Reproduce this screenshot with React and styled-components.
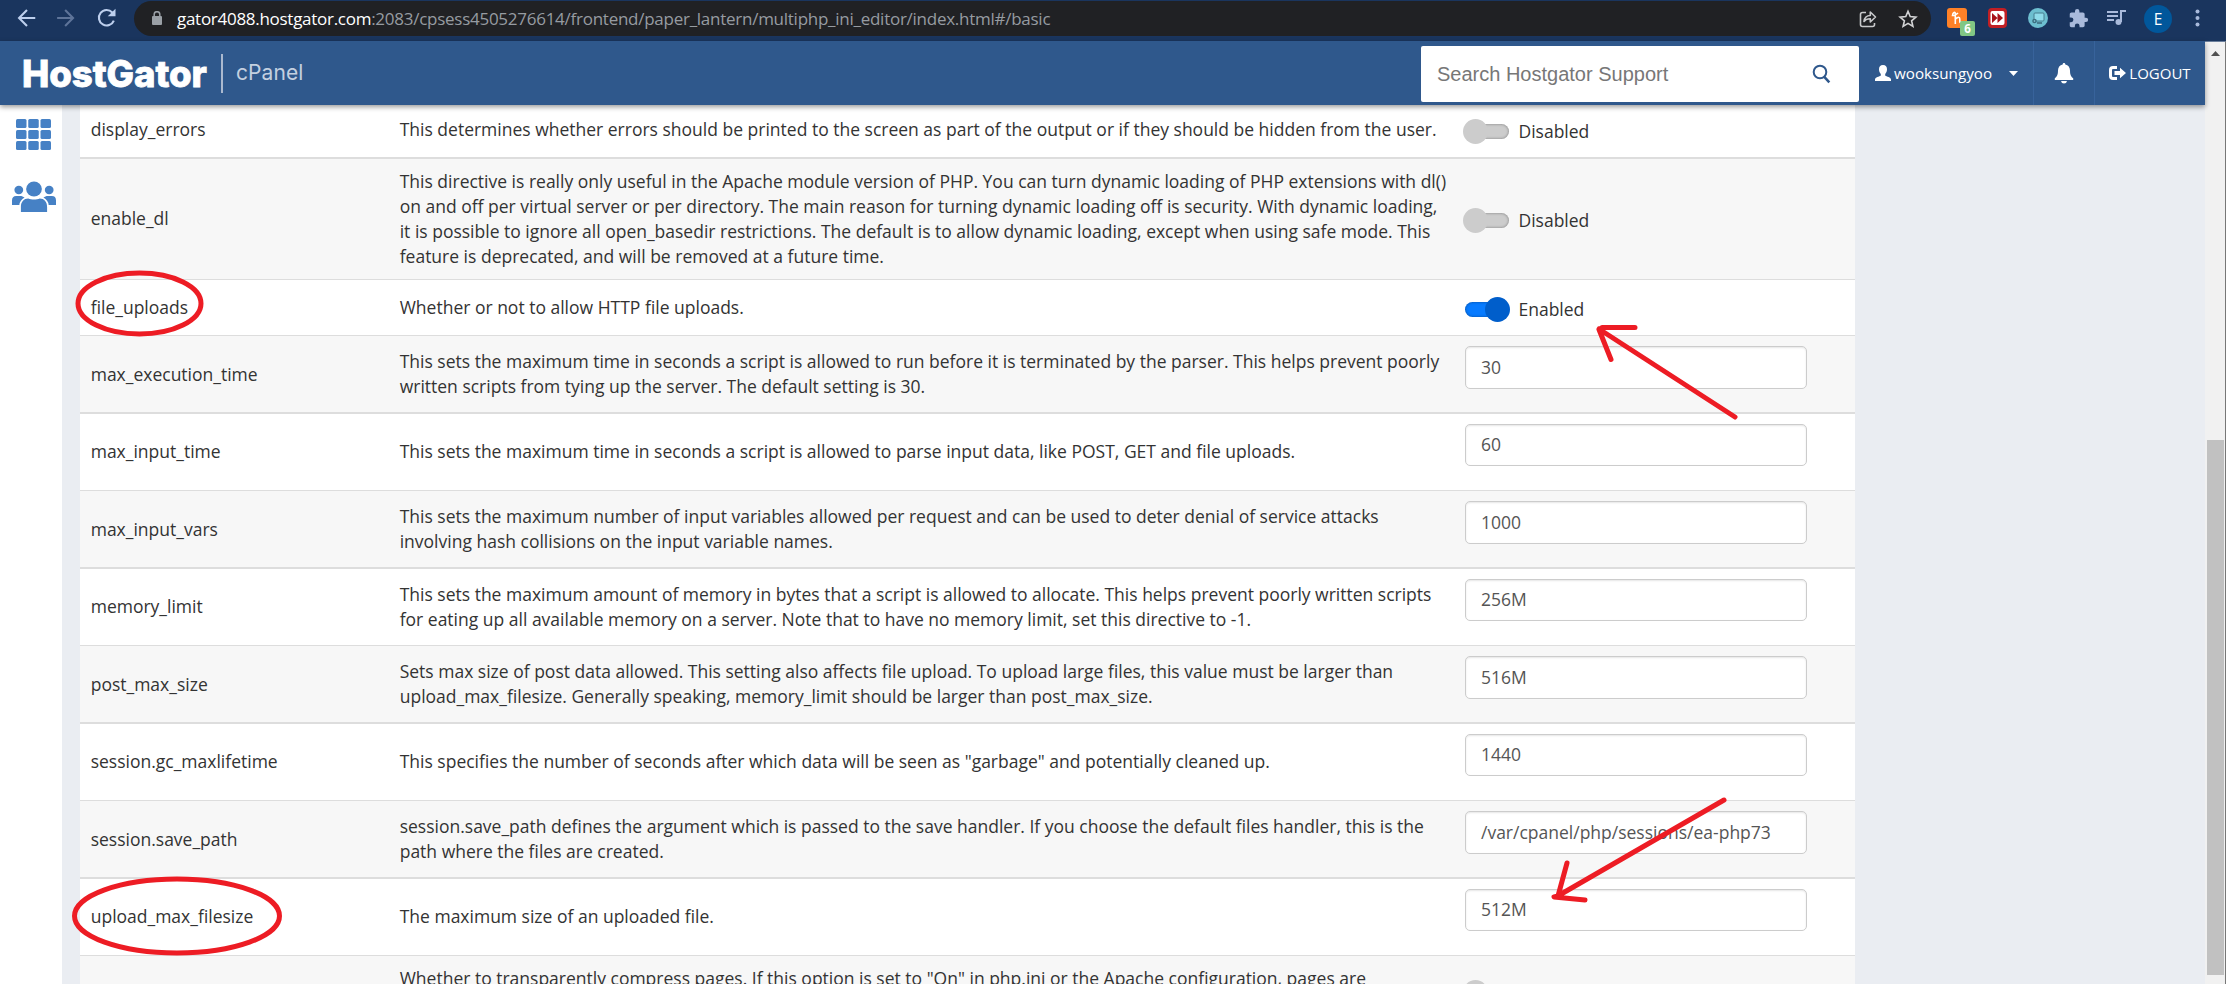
import React from 'react';
import styled, { createGlobalStyle } from 'styled-components';

const Global = createGlobalStyle`
  * { box-sizing: border-box; }
  body { margin: 0; width: 2226px; height: 984px; overflow: hidden; background: #eaedf2;
    font-family: 'Open Sans', 'Noto Sans', sans-serif; font-size: 17.5px; line-height: 25px; color: #333; }
`;
const Page = styled.div`position: relative; width: 2226px; height: 984px; overflow: hidden; display: flex; flex-direction: column;`;

const Chrome = styled.div`height: 41px; flex: none; background: #1a355e; display: flex; align-items: flex-start;`;
const NavIcons = styled.div`width: 134px; flex: none; height: 36px; padding-left: 16px; display: flex; align-items: center; gap: 18px;`;
const AddressBar = styled.div`width: 1797px; flex: none; height: 35px; margin-top: 1px; border-radius: 18px; background: #202124; display: flex; align-items: center; padding: 0 13px 0 17px;`;
const Url = styled.div`flex: 1; margin-left: 14px; font: 17px/35px 'Open Sans', sans-serif; letter-spacing: -.26px; color: #969ba1; white-space: nowrap;
  b { color: #fff; font-weight: 400; letter-spacing: -.28px; }`;
const BarIcons = styled.div`display: flex; align-items: center; gap: 20px;`;
const Extensions = styled.div`flex: 1; height: 36px; display: flex; align-items: center; position: relative; padding-left: 16px;`;
const ExtSlot = styled.div`width: ${p => p.$w}px; flex: none; height: 36px; display: flex; align-items: center;`;
const ExtBadge = styled.div`position: absolute; left: 29px; top: 21px; width: 15px; height: 15px; border-radius: 2px; background: #81c784; color: #fff; font: 700 11.5px/16px 'Open Sans', sans-serif; text-align: center;`;
const Avatar = styled.div`width: 28px; height: 28px; margin-top: 2px; border-radius: 50%; background: #01579b; color: #fff; font: 15.5px/28px 'Open Sans', sans-serif; text-align: center;`;

const Body = styled.div`flex: 1; min-height: 0; display: flex;`;
const Site = styled.div`width: 2205px; flex: none; display: flex; flex-direction: column;`;
const Header = styled.header`position: relative; z-index: 2; height: 64px; flex: none; background: #2f588c; box-shadow: 0 2px 5px rgba(0,0,0,.4); display: flex;`;
const Brand = styled.div`flex: 1; display: flex; align-items: flex-start; padding-left: 22px;`;
const Logo = styled.div`width: 199px; flex: none; font: 800 36.5px/40px 'Inter', sans-serif; letter-spacing: -.05px; color: #fff; margin-top: 13px; white-space: nowrap; -webkit-text-stroke: .8px #fff;`;
const CPanel = styled.div`height: 39px; margin-top: 13px; border-left: 2px solid #aab9cf; padding-left: 13px; font: 21px/37px 'Inter', sans-serif; letter-spacing: .1px; color: #c4d0e0;`;
const Search = styled.div`width: 438px; flex: none; height: 56px; margin-top: 5px; background: #fff; border-radius: 2px; display: flex; align-items: center; justify-content: space-between; padding: 0 28px 0 16px; font: 20px/57px 'Liberation Sans', sans-serif; color: #777;`;
const UserMenu = styled.div`width: 174px; flex: none; display: flex; align-items: center; padding: 0 0 0 16px; color: #fff; font: 500 15.2px/66px 'Open Sans', sans-serif;`;
const UserName = styled.span`margin-left: 3px; width: 97px;`;
const Caret = styled.svg`margin-left: 18px;`;
const HeaderButton = styled.div`width: ${p => p.$w}px; flex: none; border-left: 1px solid #38639b; display: flex; align-items: center; justify-content: center; gap: 3px; color: #fff; font: 500 15px/66px 'Open Sans', sans-serif;`;

const Content = styled.div`flex: 1; min-height: 0; display: flex;`;
const Sidebar = styled.nav`width: 62px; flex: none; background: #fff; display: flex; flex-direction: column; align-items: center; padding: 14px 0 0 5px; gap: 31px;`;
const Table = styled.div`width: 1775px; flex: none; margin-left: 18px; background: #fff; overflow: hidden;`;
const Row = styled.div`height: ${p => p.$h}px; border-top: ${p => p.$line}px solid #ddd; background: ${p => (p.$alt ? '#f7f7f7' : '#fff')}; display: grid; grid-template-columns: 309px 1063.3px 1fr; padding-left: 10.7px; overflow: hidden;`;
const Name = styled.div`padding-top: ${p => p.$top}px; white-space: nowrap;`;
const Description = styled.div`padding-top: ${p => p.$top}px; white-space: nowrap;`;
const Setting = styled.div`padding-top: ${p => p.$top}px; display: flex; align-items: flex-start;`;
const Field = styled.div`width: 342px; height: ${p => p.$h}px; margin-left: 2px; border: 1px solid #ccc; border-radius: 5px; background: #fff; box-shadow: inset 0 1px 2px rgba(0,0,0,.1); padding-left: 15px; color: #555; line-height: ${p => (p.$h === 43 ? 41 : 39)}px;`;
const Toggle = styled.div`position: relative; width: 47px; height: 25px; display: flex; align-items: center; justify-content: ${p => (p.$on ? 'flex-end' : 'flex-start')};
  &::before { content: ''; position: absolute; left: 2px; right: ${p => (p.$on ? 2 : 1)}px; top: 5px; height: 15px; border-radius: 8px; background: ${p => (p.$on ? '#077bff' : '#ccc')}; box-shadow: inset 0 0 3px rgba(0,0,0,.4); }
  &::after { content: ''; position: relative; width: 25px; height: 25px; border-radius: 50%; background: ${p => (p.$on ? '#005ecb' : '#ccc')}; }`;
const ToggleLabel = styled.span`margin-left: 8.5px;`;
const Scrollbar = styled.div`width: 21px; background: #f1f1f1; border-top: 1px solid #6b7f9c; border-right: 1px solid #777; display: flex; flex-direction: column; align-items: center;`;
const Arrow = styled.svg`margin: 9px 0 0 1px; flex: none;`;
const Thumb = styled.div`width: 17px; height: 535px; flex: none; margin: 384px 0 0 1px; background: #c1c1c1;`;
const Annotations = styled.svg`position: absolute; inset: 0; z-index: 5; pointer-events: none;`;

const settings = [
  { name: 'display_errors', lines: ['This determines whether errors should be printed to the screen as part of the output or if they should be hidden from the user.'], state: 'Disabled', h: 52, line: 0, n: 12, d: 12, c: 14 },
  { name: 'enable_dl', lines: ['This directive is really only useful in the Apache module version of PHP. You can turn dynamic loading of PHP extensions with dl()', 'on and off per virtual server or per directory. The main reason for turning dynamic loading off is security. With dynamic loading,', 'it is possible to ignore all open_basedir restrictions. The default is to allow dynamic loading, except when using safe mode. This', 'feature is deprecated, and will be removed at a future time.'], state: 'Disabled', h: 122, line: 2, n: 47, d: 10, c: 49 },
  { name: 'file_uploads', lines: ['Whether or not to allow HTTP file uploads.'], state: 'Enabled', h: 56, line: 1, n: 15, d: 15, c: 17 },
  { name: 'max_execution_time', lines: ['This sets the maximum time in seconds a script is allowed to run before it is terminated by the parser. This helps prevent poorly', 'written scripts from tying up the server. The default setting is 30.'], value: '30', h: 77, line: 1 },
  { name: 'max_input_time', lines: ['This sets the maximum time in seconds a script is allowed to parse input data, like POST, GET and file uploads.'], value: '60', h: 78, line: 2 },
  { name: 'max_input_vars', lines: ['This sets the maximum number of input variables allowed per request and can be used to deter denial of service attacks', 'involving hash collisions on the input variable names.'], value: '1000', h: 77, line: 1 },
  { name: 'memory_limit', lines: ['This sets the maximum amount of memory in bytes that a script is allowed to allocate. This helps prevent poorly written scripts', 'for eating up all available memory on a server. Note that to have no memory limit, set this directive to -1.'], value: '256M', h: 78, line: 2, d: 13 },
  { name: 'post_max_size', lines: ['Sets max size of post data allowed. This setting also affects file upload. To upload large files, this value must be larger than', 'upload_max_filesize. Generally speaking, memory_limit should be larger than post_max_size.'], value: '516M', h: 77, line: 1 },
  { name: 'session.gc_maxlifetime', lines: ['This specifies the number of seconds after which data will be seen as "garbage" and potentially cleaned up.'], value: '1440', h: 78, line: 2 },
  { name: 'session.save_path', lines: ['session.save_path defines the argument which is passed to the save handler. If you choose the default files handler, this is the', 'path where the files are created.'], value: '/var/cpanel/php/sessions/ea-php73', h: 77, line: 1 },
  { name: 'upload_max_filesize', lines: ['The maximum size of an uploaded file.'], value: '512M', h: 78, line: 2 },
  { name: '', lines: ['Whether to transparently compress pages. If this option is set to "On" in php.ini or the Apache configuration, pages are'], state: '', h: 60, line: 1, n: 12, d: 10, c: 24 },
];

function SettingRow({ item, alt }) {
  const name = item.n ?? 27 - item.line;
  const desc = item.d ?? (item.lines.length === 2 ? 14 : 27) - item.line;
  return (
    <Row $h={item.h} $line={item.line} $alt={alt}>
      <Name $top={name}>{item.name}</Name>
      <Description $top={desc}>{item.lines.map(l => <div key={l}>{l}</div>)}</Description>
      <Setting $top={item.c ?? 10}>
        {item.value ? <Field $h={item.line === 1 ? 43 : 42}>{item.value}</Field> : <><Toggle $on={item.state === 'Enabled'} /><ToggleLabel>{item.state}</ToggleLabel></>}
      </Setting>
    </Row>
  );
}

const stroke = { fill: 'none', strokeWidth: 1.9 };

export default function App() {
  return (
    <Page>
      <Global />
      <Chrome>
        <NavIcons>
          <svg width="22" height="22" viewBox="0 0 20 20" {...stroke} stroke="#bdcfed"><path d="M17.5 10H3M10 2.8 2.8 10l7.2 7.2" /></svg>
          <svg width="22" height="22" viewBox="0 0 20 20" {...stroke} stroke="#5e7499"><path d="M1 10h14.5M8.3 2.8l7.2 7.2-7.2 7.2" /></svg>
          <svg width="22" height="22" viewBox="0 0 20 20" {...stroke} stroke="#bdcfed"><path d="M16.2 12.3A7 7 0 1 1 14.8 5" /><path d="M17.7 1.5v7h-7z" fill="#bdcfed" stroke="none" /></svg>
        </NavIcons>
        <AddressBar>
          <svg width="12" height="15" viewBox="0 0 12 15"><rect x="1" y="5" width="10" height="9" rx="1" fill="#9aa0a6" /><path d="M3.2 6V3.5a2.8 2.8 0 0 1 5.6 0V6" fill="none" stroke="#9aa0a6" strokeWidth="1.5" /></svg>
          <Url><b>gator4088.hostgator.com</b>:2083/cpsess4505276614/frontend/paper_lantern/multiphp_ini_editor/index.html#/basic</Url>
          <BarIcons>
            <svg width="20" height="20" viewBox="0 0 20 20" fill="none" stroke="#c8c9cb" strokeWidth="1.6" strokeLinejoin="round"><path d="M8 3.5H4.5Q2.5 3.5 2.5 5.5v10Q2.5 17.5 4.5 17.5h10q2 0 2-2V14" /><path d="M6 12.5c.5-4 3-6 6.3-6V3l5.2 5-5.2 5V9.8c-3-.1-4.7.7-6.3 2.7z" /></svg>
            <svg width="20" height="20" viewBox="0 0 20 20" fill="none" stroke="#d2d3d5" strokeWidth="1.6"><path d="m10 2.3 2.2 5.3 5.7.5-4.3 3.7 1.3 5.6L10 14.4l-4.9 3 1.3-5.6-4.3-3.7 5.7-.5z" /></svg>
          </BarIcons>
        </AddressBar>
        <Extensions>
          <ExtSlot $w={41}><svg width="20" height="20" viewBox="0 0 20 20"><rect width="20" height="20" rx="3" fill="#ff8127" /><path d="M8.3 16V6Q8.3 4 7 4.5T5.5 7.5Q8 8 11 5M8.3 11q4.5-3.5 4.5 0v2.5q0 2 2 .5" stroke="#fff" strokeWidth="1.6" fill="none" /></svg></ExtSlot>
          <ExtSlot $w={40}><svg width="19" height="20" viewBox="0 0 19 20"><rect width="19" height="20" rx="4" fill="#c11f24" /><rect x="2.5" y="3" width="14" height="14" rx="2" fill="#fff" /><path d="m4 5 5.5 5L4 15zM9.5 5l5.5 5-5.5 5z" fill="#a81119" /></svg></ExtSlot>
          <ExtSlot $w={40}><svg width="20" height="20" viewBox="0 0 20 20"><circle cx="10" cy="10" r="10" fill="#6dbfd0" /><rect x="6" y="5" width="10" height="8" rx="1" fill="#8edbea" stroke="#477e90" /><path d="M9 15h5" stroke="#477e90" strokeWidth="2" /><circle cx="6.5" cy="13" r="2.3" fill="#3c6f80" /><circle cx="6.5" cy="13" r=".8" fill="#8edbea" /></svg></ExtSlot>
          <ExtSlot $w={38}><svg width="21" height="21" viewBox="0 0 24 24" fill="#a9badb"><path d="M20.5 11H19V7c0-1.1-.9-2-2-2h-4V3.5a2.5 2.5 0 0 0-5 0V5H4c-1.1 0-2 .9-2 2v3.8h1.5a2.7 2.7 0 0 1 0 5.4H2V20c0 1.1.9 2 2 2h3.8v-1.5a2.7 2.7 0 0 1 5.4 0V22H17c1.1 0 2-.9 2-2v-4h1.5a2.5 2.5 0 0 0 0-5z" /></svg></ExtSlot>
          <ExtSlot $w={38}><svg width="20" height="20" viewBox="0 0 20 20"><path d="M1 4h11M1 8h11M1 12h7" stroke="#a9badb" strokeWidth="2" /><circle cx="12.5" cy="14" r="3" fill="#a9badb" /><path d="M15 14V3h5" fill="none" stroke="#a9badb" strokeWidth="2" /></svg></ExtSlot>
          <ExtSlot $w={51}><Avatar>E</Avatar></ExtSlot>
          <svg width="5" height="18" viewBox="0 0 5 18" fill="#a9badb"><circle cx="2.5" cy="2.5" r="2" /><circle cx="2.5" cy="9" r="2" /><circle cx="2.5" cy="15.5" r="2" /></svg>
          <ExtBadge>6</ExtBadge>
        </Extensions>
      </Chrome>
      <Body>
        <Site>
          <Header>
            <Brand><Logo>HostGator</Logo><CPanel>cPanel</CPanel></Brand>
            <Search>Search Hostgator Support<svg width="19" height="20" viewBox="0 0 19 20" fill="none" stroke="#2f588c" strokeWidth="2"><circle cx="8" cy="8" r="6.3" /><path d="m12.3 12.8 5 5.5" strokeWidth="2.5" /></svg></Search>
            <UserMenu>
              <svg width="16" height="16" viewBox="0 0 16 16" fill="#fff"><path d="M8 0c2.8 0 4 1.8 4 4.3 0 2-.8 3.7-1.8 4.7v1.5C11.5 11.7 16 12 16 14.5V16H0v-1.5C0 12 4.5 11.7 5.8 10.5V9C4.8 8 4 6.3 4 4.3 4 1.8 5.2 0 8 0z" /></svg>
              <UserName>wooksungyoo</UserName>
              <Caret width="9" height="5" viewBox="0 0 9 5"><path d="M0 0h9L4.5 5z" fill="#fff" /></Caret>
            </UserMenu>
            <HeaderButton $w={61}><svg width="20" height="21" viewBox="0 0 20 21" fill="#fff"><path d="M10 0c1 0 1.3.7 1.3 1.5 3 .6 4.7 3 4.7 6 0 5 1.5 6.5 3.2 7.8V17H.8v-1.7C2.5 14 4 12.5 4 7.5c0-3 1.7-5.4 4.7-6C8.7.7 9 0 10 0zM7 18h6q-.5 2.5-3 2.5T7 18z" /></svg></HeaderButton>
            <HeaderButton $w={111}><svg width="17" height="14" viewBox="0 0 17 14"><path d="M8 1.5H4Q1.5 1.5 1.5 4v6Q1.5 12.5 4 12.5h4" fill="none" stroke="#fff" strokeWidth="3" /><path d="M5.5 5H11V1.8L17 7l-6 5.2V9H5.5z" fill="#fff" /></svg>LOGOUT</HeaderButton>
          </Header>
          <Content>
            <Sidebar>
              <svg width="35" height="31" viewBox="0 0 35 31" fill="#4681c5">{[0, 12.25, 24.5].flatMap(x => [0, 11, 22].map(y => <rect key={`${x}-${y}`} x={x} y={y} width="10.5" height="9" rx="1.5" />))}</svg>
              <svg width="44" height="31" viewBox="0 0 42 31" preserveAspectRatio="none" fill="#4681c5"><circle cx="21" cy="8" r="7.5" /><circle cx="6.5" cy="9" r="4.2" /><circle cx="35.5" cy="9" r="4.2" /><path d="M8.5 31v-5c0-5.5 3-8.5 7-8.5 3 1.4 8 1.4 11 0 4 0 7 3 7 8.5v5zM0 24v-4.5q0-4.5 4-4.5h5l3 1.5Q7.5 19 7 24zM42 24v-4.5q0-4.5-4-4.5h-5l-3 1.5q4.5 2.5 5 7.5z" /></svg>
            </Sidebar>
            <Table>{settings.map((s, i) => <SettingRow key={i} item={s} alt={i % 2 === 1} />)}</Table>
          </Content>
        </Site>
        <Scrollbar>
          <Arrow width="9" height="5" viewBox="0 0 9 5"><path d="M0 5h9L4.5 0z" fill="#505050" /></Arrow>
          <Thumb />
        </Scrollbar>
      </Body>
      <Annotations width="2226" height="984" fill="none" stroke="#ed1c24" strokeWidth="5" strokeLinecap="round" strokeLinejoin="round">
        <ellipse cx="139.5" cy="303.5" rx="61.5" ry="30.5" />
        <ellipse cx="177" cy="916" rx="102.5" ry="37" />
        <path d="M1735 417 1599 329M1635 327.5h-33l-3 2 12 30" />
        <path d="M1724 800 1556 897M1567 863l-9 33-4 1 31 3" />
      </Annotations>
    </Page>
  );
}
